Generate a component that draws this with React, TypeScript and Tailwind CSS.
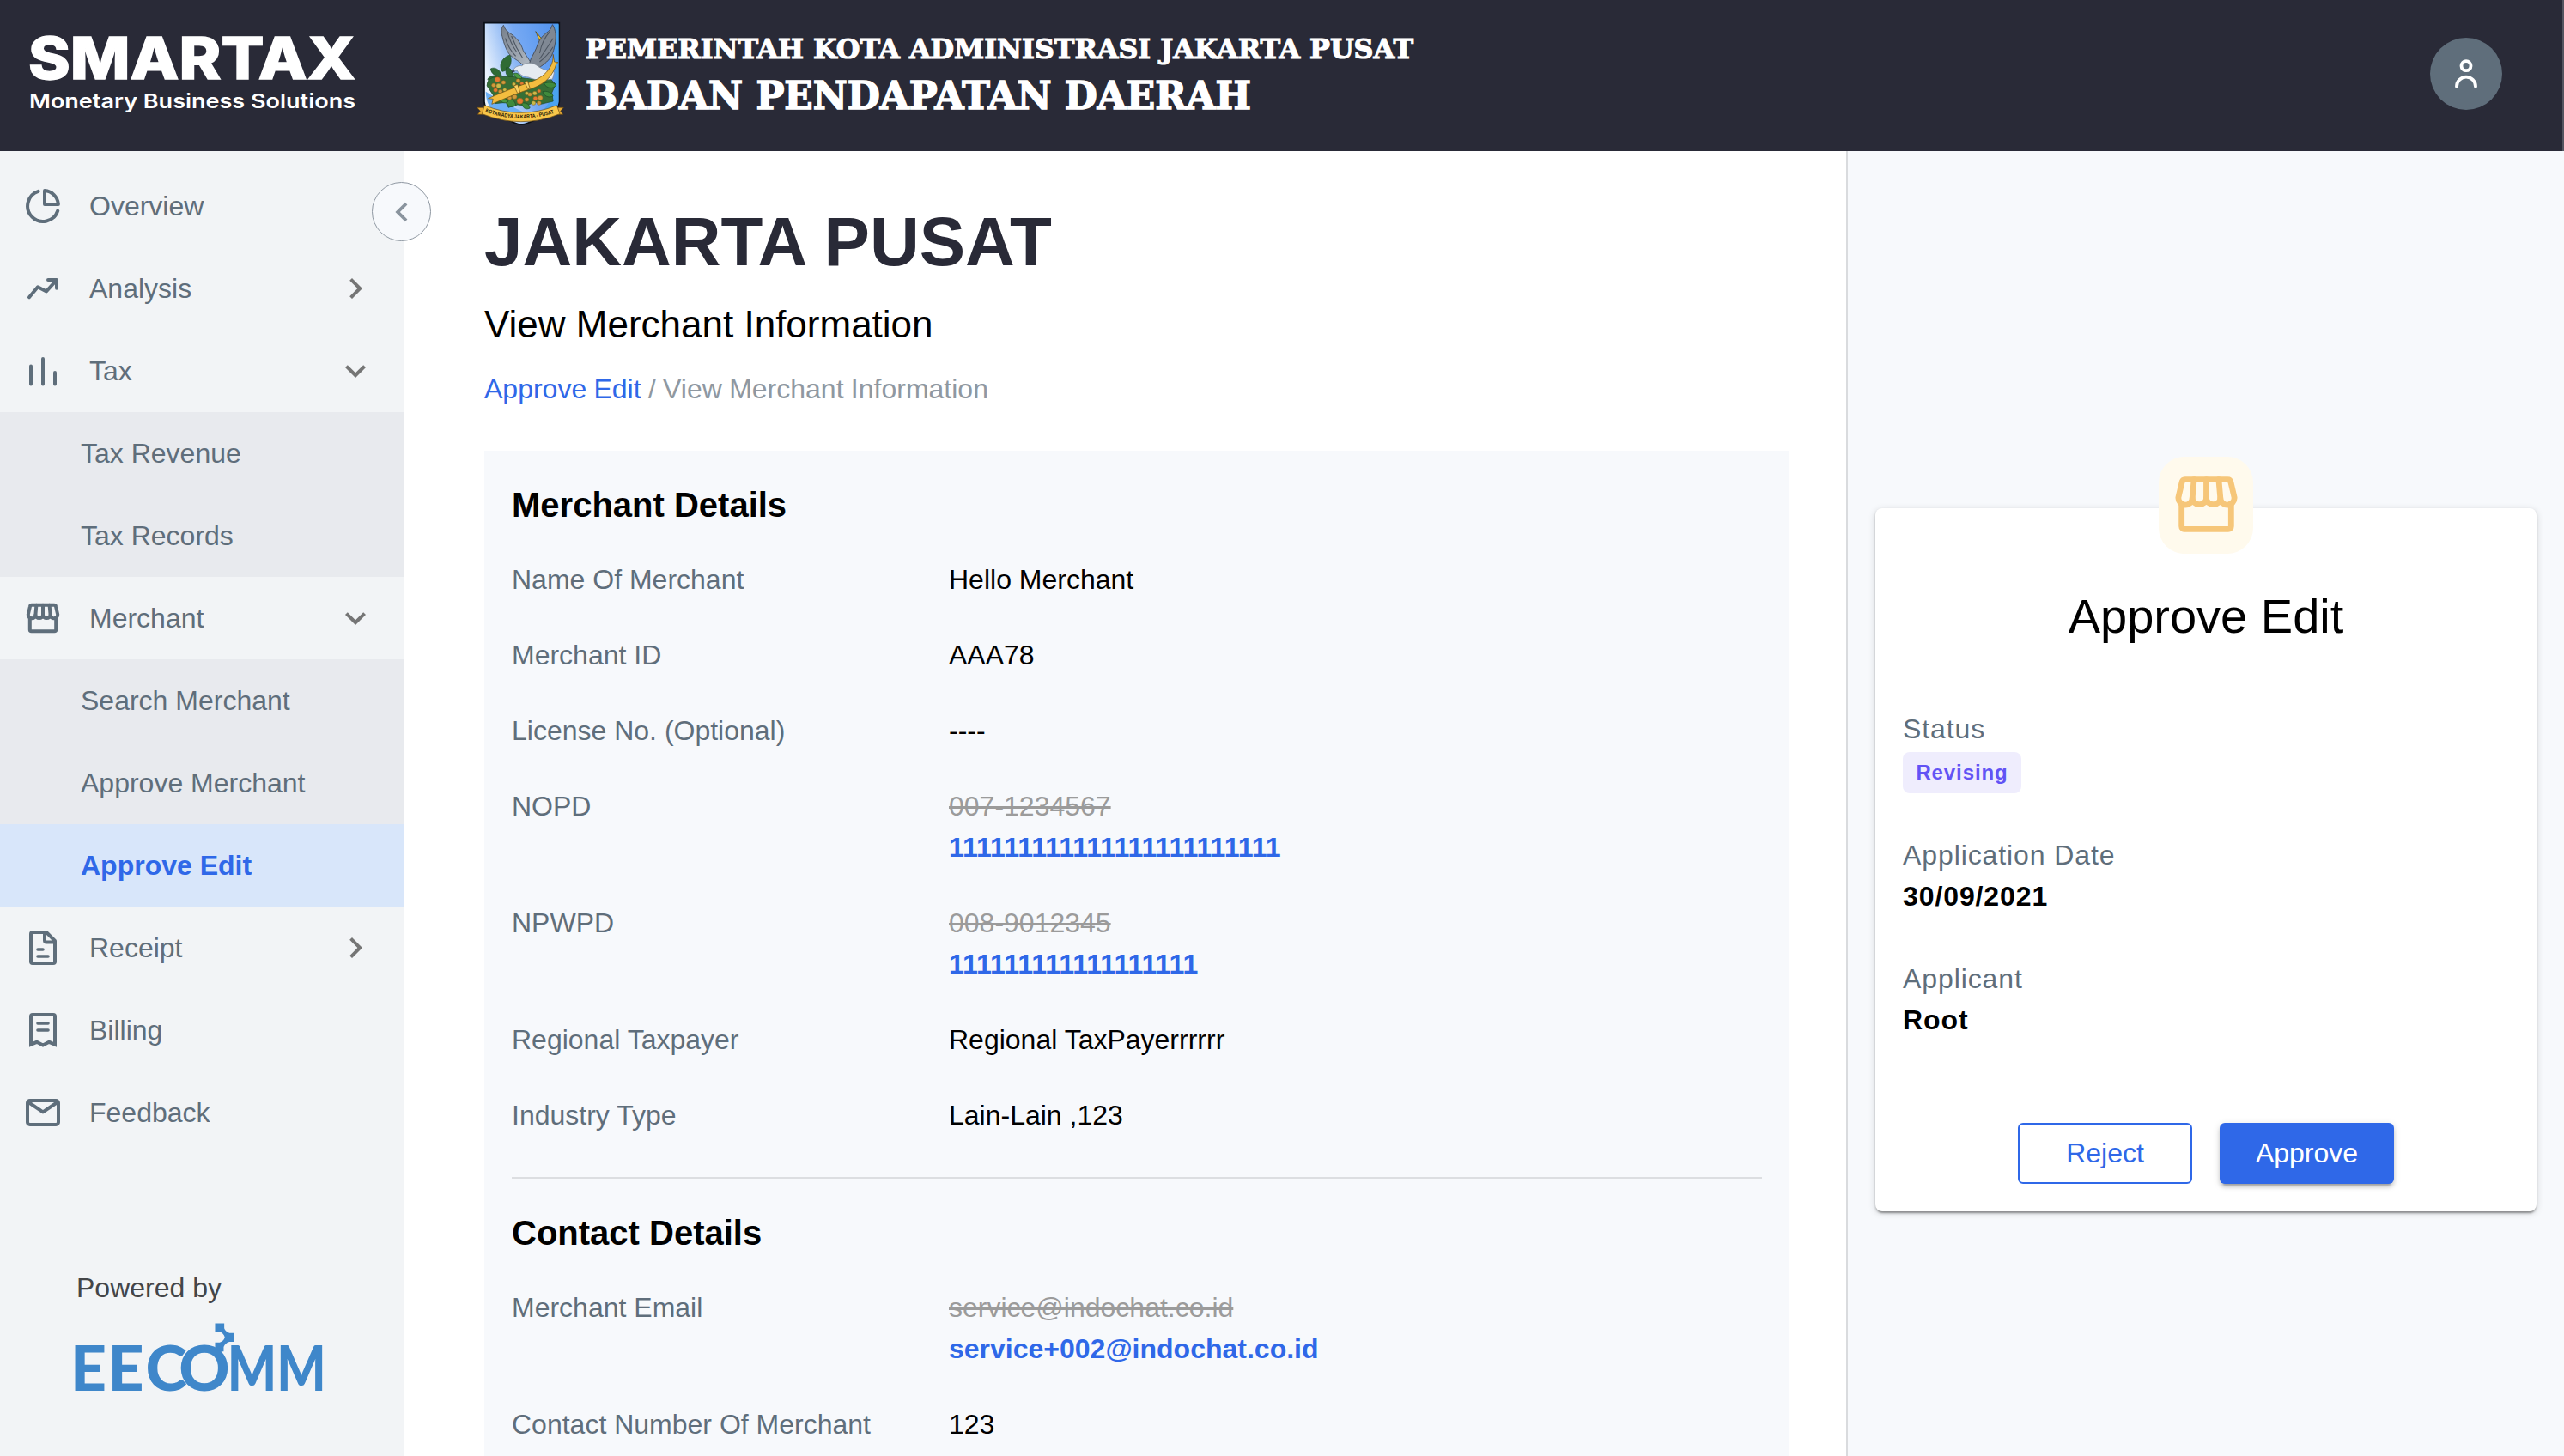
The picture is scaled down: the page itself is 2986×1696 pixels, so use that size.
import type { ReactNode } from "react";

const Svg = ({ children, className = "size-12" }: { children: ReactNode; className?: string }) => (
  <svg viewBox="0 0 24 24" className={className} fill="none" stroke="currentColor" strokeWidth="2" strokeLinecap="round" strokeLinejoin="round">
    {children}
  </svg>
);

const PieIcon = () => (
  <Svg>
    <path d="M9.3 3.4A9 9 0 1 0 20.6 14.8" />
    <path d="M13 3.05V11h7.95A8.6 8.6 0 0 0 13 3.05Z" />
  </Svg>
);
const TrendIcon = () => (
  <Svg>
    <path d="M4 17.1 9 11.1l5 2.6 5.6-6.2" />
    <path d="M15 7h5v4.9" />
  </Svg>
);
const BarsIcon = () => (
  <Svg>
    <path d="M5 9.2v10.6M12 5v14.8M19 13v6.8" />
  </Svg>
);
const StoreIcon = ({ className, w = "1.8" }: { className?: string; w?: string }) => (
  <Svg className={className}>
    <g strokeWidth={w}>
      <path d="M5.5 4.4h13c.5 0 .9.3 1 .8l1.1 4.7a2.15 2.15 0 0 1-4.3.2 2.15 1.95 0 0 1-4.3 0 2.15 1.95 0 0 1-4.3 0 2.15 2.15 0 0 1-4.3-.2l1.1-4.7c.1-.5.5-.8 1-.8Z" />
      <path d="M8.2 4.4 7.7 10.1M12 4.4v5.7M15.8 4.4l.5 5.7" />
      <path d="M4.4 11.8v6.9c0 .5.4.9.9.9h13.4c.5 0 .9-.4.9-.9v-6.9" />
    </g>
  </Svg>
);
const ReceiptIcon = () => (
  <Svg>
    <path d="M6 3h8l5 5v12a1 1 0 0 1-1 1H6a1 1 0 0 1-1-1V4a1 1 0 0 1 1-1Z" />
    <path d="M13 3.2v4.5a1 1 0 0 0 1 1h4.8" />
    <path d="M9 13h3M9 17h6" strokeWidth="1.8" />
  </Svg>
);
const BillIcon = () => (
  <Svg>
    <path d="M5 20.4V4a1 1 0 0 1 1-1h12a1 1 0 0 1 1 1v16.4l-3.4-1.5-3.6 1.9-3.6-1.9Z" strokeLinejoin="miter" />
    <path d="M9 8h6M9 12h6" strokeWidth="1.8" />
  </Svg>
);
const MailIcon = () => (
  <Svg>
    <rect x="3" y="5" width="18" height="14" rx="1.4" />
    <path d="m3.6 6 8.4 5.7L20.4 6" />
  </Svg>
);

const Chevron = ({ dir }: { dir: "right" | "down" | "left" }) => (
  <svg viewBox="0 0 24 24" className="size-12" fill="currentColor">
    {dir === "right" && <path d="M10 6 8.59 7.41 13.17 12l-4.58 4.59L10 18l6-6z" />}
    {dir === "down" && <path d="M16.59 8.59 12 13.17 7.41 8.59 6 10l6 6 6-6z" />}
    {dir === "left" && <path d="M15.21 7.71 13.9 6.4 8.2 12l5.7 5.6 1.31-1.31L10.93 12z" />}
  </svg>
);

const Emblem = () => (
  <svg viewBox="42 45 286 366" preserveAspectRatio="none" className="h-[122px] w-[102px]">
    <defs>
      <linearGradient id="sky" x1="0" y1=".4" x2="1" y2="0">
        <stop offset="0" stopColor="#e9f2fd" />
        <stop offset=".45" stopColor="#76a9f3" />
        <stop offset="1" stopColor="#4d90ee" />
      </linearGradient>
      <linearGradient id="wing" x1="0" y1="0" x2="1" y2="1">
        <stop offset="0" stopColor="#767f8b" />
        <stop offset="1" stopColor="#b4bcc6" />
      </linearGradient>
    </defs>
    <path d="M67 50H312V325Q312 350 284 365L210 400Q188 411 167 400L96 365Q67 350 67 325Z" fill="url(#sky)" stroke="#0b1018" strokeWidth="5" />
    <path d="M298 55h12v270q0 14-14 26l-50 20q60-60 52-150Z" fill="#4aa3f0" />
    <path d="M72 290q60 40 130 75l-40 20-60-25q-28-18-30-70Z" fill="#6cb0f5" />
    <g fill="#2f6b34" stroke="#1c4a26" strokeWidth="2">
      <path d="M152 162c-26 8-40 34-26 58 24-4 34-30 26-58Z" />
      <path d="M88 210c14-8 32 4 36 26-18 2-34-6-36-26Z" />
      <path d="M78 246c14-18 36-14 44 4-14 18-36 14-44-4Z" />
      <path d="M140 205c18 4 26 22 18 40-18-4-24-22-18-40Z" />
      <path d="M76 270q0-30 34-32l50 0 60 8 60-4 20 22-12 30 4 30-40 10-20-8-26 14-30-4-30 10-8-18-36 4-6-30Z" fill="#376f35" />
      <path d="M262 262c16-8 34-4 40 6-10 14-30 12-40-6ZM258 290c14-4 30 4 34 16-16 8-32-2-34-16Z" fill="#3f8a3c" />
      <path d="M140 318c16-6 28 4 30 20-16 14-32 0-30-20ZM190 330c16-2 26 6 26 18-14 8-26-4-26-18Z" fill="#3f8a3c" />
      <path d="M118 318c10-8 22-4 28 6-8 10-22 6-28-6ZM164 226c14-2 24 6 26 18-14 4-26-4-26-18Z" fill="#4b9a43" />
    </g>
    <g stroke="#8a5a1a" strokeWidth="1.5">
      {[[110, 248, 9], [130, 258, 7], [98, 268, 7], [114, 270, 8], [104, 285, 7], [120, 290, 7], [134, 284, 6], [178, 252, 7], [190, 262, 6], [164, 264, 6], [150, 312, 7], [166, 308, 8], [184, 323, 10], [206, 318, 7], [216, 300, 7], [232, 296, 7], [246, 288, 6], [250, 312, 8], [228, 330, 7], [246, 330, 7], [234, 314, 7], [206, 296, 6]].map(([x, y, r], i) => (
        <circle key={i} cx={x} cy={y} r={r} fill={i % 4 === 0 ? "#e57a33" : i % 3 === 0 ? "#c9bb4a" : "#d09a3c"} />
      ))}
    </g>
    <path d="m235 80 26 34-10 8Z" fill="#f2c230" stroke="#4b3b12" strokeWidth="2" />
    <path d="M130 58c-8 10-8 26-4 40 6 26 12 44 22 60 14 16 24 20 36 30l14 14 22-12c-8-14-20-32-26-44-8-28-22-46-46-62-10-8-14-14-18-26Z" fill="url(#wing)" stroke="#454d58" strokeWidth="2.5" />
    <path d="M290 56c-4 10-6 18-14 24-16 12-28 26-34 44-6 20-14 34-22 50l-8 26 32 8c20-14 36-28 44-46 8-20 14-50 12-74-2-12-4-22-10-32Z" fill="#7f8894" stroke="#3f4650" strokeWidth="2.5" />
    <path d="M142 80q10 40 30 70M156 96q14 40 36 76M282 80q-26 30-34 76M292 104q-22 36-44 72M292 134q-18 30-44 52M136 104q10 36 34 62" fill="none" stroke="#4c5561" strokeWidth="3" />
    <path d="M160 218c6-14 18-20 30-18 14-14 34-12 48-2 10 8 24 18 58 24l-6 24c-34 6-60 4-78-6-18-2-30-10-38-24Z" fill="#e6ebf1" stroke="#7c8692" strokeWidth="2" />
    <path d="m160 214-4 10 12-4Z" fill="#26303a" />
    <path d="M292 160c2 40-22 78-78 98-44 16-78 30-134 56l16 2-4 18c50-24 92-42 134-56 44-18 66-46 76-84l6-6-12-2Z" fill="#f3bd3f" stroke="#6a4a10" strokeWidth="2" />
    <path d="m164 270 12 26 8-3-8-28ZM198 257l12 24 6-4-8-25Z" fill="#f8d263" stroke="#6a4a10" strokeWidth="2" />
    <path d="M44 346h26l-8 24H46l8-12ZM326 346h-26l8 24h16l-8-12Z" fill="#e6ab35" stroke="#6a4a10" strokeWidth="2" />
    <path d="M68 338q118 52 236 0l10 30q-126 54-254 0Z" fill="#f8c64a" stroke="#6a4a10" strokeWidth="2" />
    <path id="motto" d="M70 361q117 46 238 0" fill="none" />
    <text fontFamily="Liberation Sans" fontWeight="700" fontSize="19" fill="#2a1d08">
      <textPath href="#motto" textLength="230" lengthAdjust="spacingAndGlyphs">KOTAMADYA JAKARTA - PUSAT</textPath>
    </text>
  </svg>
);

const NavItem = ({ icon, label, chevron }: { icon: ReactNode; label: string; chevron?: "right" | "down" }) => (
  <div className="flex h-24 items-center pl-[26px] pr-8">
    {icon}
    <span className="ml-[30px] flex-1">{label}</span>
    {chevron && (
      <span className="text-[#757575]">
        <Chevron dir={chevron} />
      </span>
    )}
  </div>
);

const SubItem = ({ label, active }: { label: string; active?: boolean }) => (
  <div className={active ? "flex h-24 items-center bg-[#d8e6fa] pl-[94px] font-bold text-[#2f68e8]" : "flex h-24 items-center bg-[#e8eaee] pl-[94px]"}>{label}</div>
);

const Row = ({ label, value, old }: { label: string; value: ReactNode; old?: string }) => (
  <div className="flex">
    <div className="w-[509px] text-[#5f6e7b]">{label}</div>
    <div>
      {old && <div className="text-[#9b9b9b] line-through decoration-[3px]">{old}</div>}
      <div className={old ? "font-bold text-[#2f68e8]" : ""}>{value}</div>
    </div>
  </div>
);

const Field = ({ label, value }: { label: string; value: string }) => (
  <div>
    <div className="text-[#5f6e7b]">{label}</div>
    <div className="font-bold">{value}</div>
  </div>
);

export default function App() {
  return (
    <div className="flex h-[1696px] w-[2986px] flex-col overflow-hidden bg-white font-['Liberation_Sans',Arial,sans-serif] text-[32px] leading-[48px] text-black">
      <header className="flex h-[176px] shrink-0 border-r-2 border-[#53545f] bg-[#292a37]">
        <svg className="h-[176px] w-[555px] shrink-0 overflow-visible" fill="#fff" fontFamily="Inter, sans-serif">
          <text x="33" y="92" fontSize="67.5" fontWeight="800" stroke="#fff" strokeWidth="1.4" textLength="381" lengthAdjust="spacingAndGlyphs">SMARTAX</text>
          <text x="34" y="125.5" fontSize="22.5" fontWeight="600" textLength="380" lengthAdjust="spacingAndGlyphs">Monetary Business Solutions</text>
        </svg>
        <div className="pt-[25px]">
          <Emblem />
        </div>
        <svg className="h-[176px] w-[1010px] shrink-0 overflow-visible" fill="#fff" stroke="#fff" strokeWidth="1.2" fontFamily="DejaVu Serif, serif" fontWeight="700">
          <text x="25" y="68" fontSize="32.5" textLength="964" lengthAdjust="spacingAndGlyphs">PEMERINTAH KOTA ADMINISTRASI JAKARTA PUSAT</text>
          <text x="25" y="126.5" fontSize="45.5" strokeWidth="1.6" textLength="775" lengthAdjust="spacingAndGlyphs">BADAN PENDAPATAN DAERAH</text>
        </svg>
        <div className="ml-auto mr-[70px] mt-11 size-[84px] rounded-full bg-[#5f6e7b]">
          <svg viewBox="150 132 252 252" className="size-full" fill="none" stroke="#fff" strokeWidth="11.5" strokeLinecap="round">
            <circle cx="276" cy="230" r="16.5" />
            <path d="M243 302a33 33 0 0 1 66 0" />
          </svg>
        </div>
      </header>

      <div className="flex min-h-0 flex-1">
        <aside className="relative flex w-[470px] shrink-0 flex-col bg-[#f2f4f6] pt-4 text-[#5f6e7b]">
          <NavItem icon={<PieIcon />} label="Overview" />
          <NavItem icon={<TrendIcon />} label="Analysis" chevron="right" />
          <NavItem icon={<BarsIcon />} label="Tax" chevron="down" />
          <SubItem label="Tax Revenue" />
          <SubItem label="Tax Records" />
          <NavItem icon={<StoreIcon w="2" />} label="Merchant" chevron="down" />
          <SubItem label="Search Merchant" />
          <SubItem label="Approve Merchant" />
          <SubItem label="Approve Edit" active />
          <NavItem icon={<ReceiptIcon />} label="Receipt" chevron="right" />
          <NavItem icon={<BillIcon />} label="Billing" />
          <NavItem icon={<MailIcon />} label="Feedback" />
          <div className="mt-[132px] pl-[89px] text-[#444548]">Powered by</div>
          <svg viewBox="80 240 880 250" className="ml-[86px] mt-4 h-[84px] w-[293px] overflow-visible" fill="#3f87ca" fontFamily="Lato, sans-serif" fontWeight="900" fontSize="220">
            <text x="68 199 331 447" y="480">EECO</text>
            <text x="617" y="480" textLength="345" lengthAdjust="spacingAndGlyphs">MM</text>
            <path d="M574 243h32v18q4 12 18 16h15v31h-15q-14 4-20 18v16h-14l-16-14v-18h16q14-4 18-18-4-14-18-19h-16Z" />
          </svg>
          <div className="absolute left-[433px] top-[36px] flex size-[69px] items-center justify-center rounded-full border border-[#8f98a2] bg-[#f7f9fc] text-[#8a949e]">
            <Chevron dir="left" />
          </div>
        </aside>

        <main className="w-[1680px] shrink-0 pl-[94px] pt-[58px]">
          <h1 className="text-[80px] font-bold leading-[96px] text-[#292a37]">JAKARTA PUSAT</h1>
          <h2 className="mt-[15px] text-[44px] leading-[66px]">View Merchant Information</h2>
          <div className="mt-[18px] text-[#8f98a1] [word-spacing:-0.6px]">
            <span className="text-[#2f68e8]">Approve Edit</span> / View Merchant Information
          </div>
          <section className="mt-[48px] h-[1300px] w-[1520px] bg-[#f7f9fc] px-8 pt-[33px]">
            <h3 className="text-[40px] font-bold leading-[60px]">Merchant Details</h3>
            <div className="mt-[33px] flex flex-col gap-10">
              <Row label="Name Of Merchant" value="Hello Merchant" />
              <Row label="Merchant ID" value="AAA78" />
              <Row label="License No. (Optional)" value="----" />
              <Row label="NOPD" old="007-1234567" value="111111111111111111111111" />
              <Row label="NPWPD" old="008-9012345" value="111111111111111111" />
              <Row label="Regional Taxpayer" value="Regional TaxPayerrrrrr" />
              <Row label="Industry Type" value="Lain-Lain ,123" />
            </div>
            <hr className="mb-[33px] mt-[48px] border-t-2 border-[#dcdee1]" />
            <h3 className="text-[40px] font-bold leading-[60px]">Contact Details</h3>
            <div className="mt-[33px] flex flex-col gap-10">
              <Row label="Merchant Email" old="service@indochat.co.id" value="service+002@indochat.co.id" />
              <Row label="Contact Number Of Merchant" value="123" />
            </div>
          </section>
        </main>

        <aside className="flex-1 border-l-2 border-[#d9dbde] bg-[#f7f9fc] pl-8 pt-[416px]">
          <div className="relative h-[819px] w-[770px] rounded-lg bg-white px-8 pt-[91px] shadow-[0_4px_2px_-2px_rgba(0,0,0,0.22),0_2px_3px_rgba(0,0,0,0.2),0_2px_8px_rgba(0,0,0,0.16)]">
            <div className="absolute left-[330px] top-[-60px] flex h-[113px] w-[110px] items-center justify-center rounded-[30px] bg-[#fffaed] text-[#f6c679]">
              <StoreIcon className="mb-[3px] size-[91px] shrink-0" />
            </div>
            <h2 className="text-center text-[56px] leading-[70px]">Approve Edit</h2>
            <div className="mt-[72px] tracking-[0.9px]">
              <div className="text-[#5f6e7b]">Status</div>
              <div className="mb-12 mt-[3px] flex h-12 w-[138px] items-center justify-center rounded-lg bg-[#efedfd] text-[24px] font-bold text-[#6253f5]">Revising</div>
              <div className="flex flex-col gap-12">
                <Field label="Application Date" value="30/09/2021" />
                <Field label="Applicant" value="Root" />
              </div>
            </div>
            <div className="mt-[96px] flex justify-center gap-8">
              <button className="h-[71px] w-[203px] rounded-md border-2 border-[#2f68e8] pb-px leading-[64px] text-[#2f68e8]">Reject</button>
              <button className="h-[71px] w-[203px] rounded-md bg-[#2f68e8] pb-px leading-[64px] text-white shadow-[0_6px_2px_-4px_rgba(0,0,0,0.2),0_4px_4px_rgba(0,0,0,0.14),0_2px_10px_rgba(0,0,0,0.12)]">Approve</button>
            </div>
          </div>
        </aside>
      </div>
    </div>
  );
}
